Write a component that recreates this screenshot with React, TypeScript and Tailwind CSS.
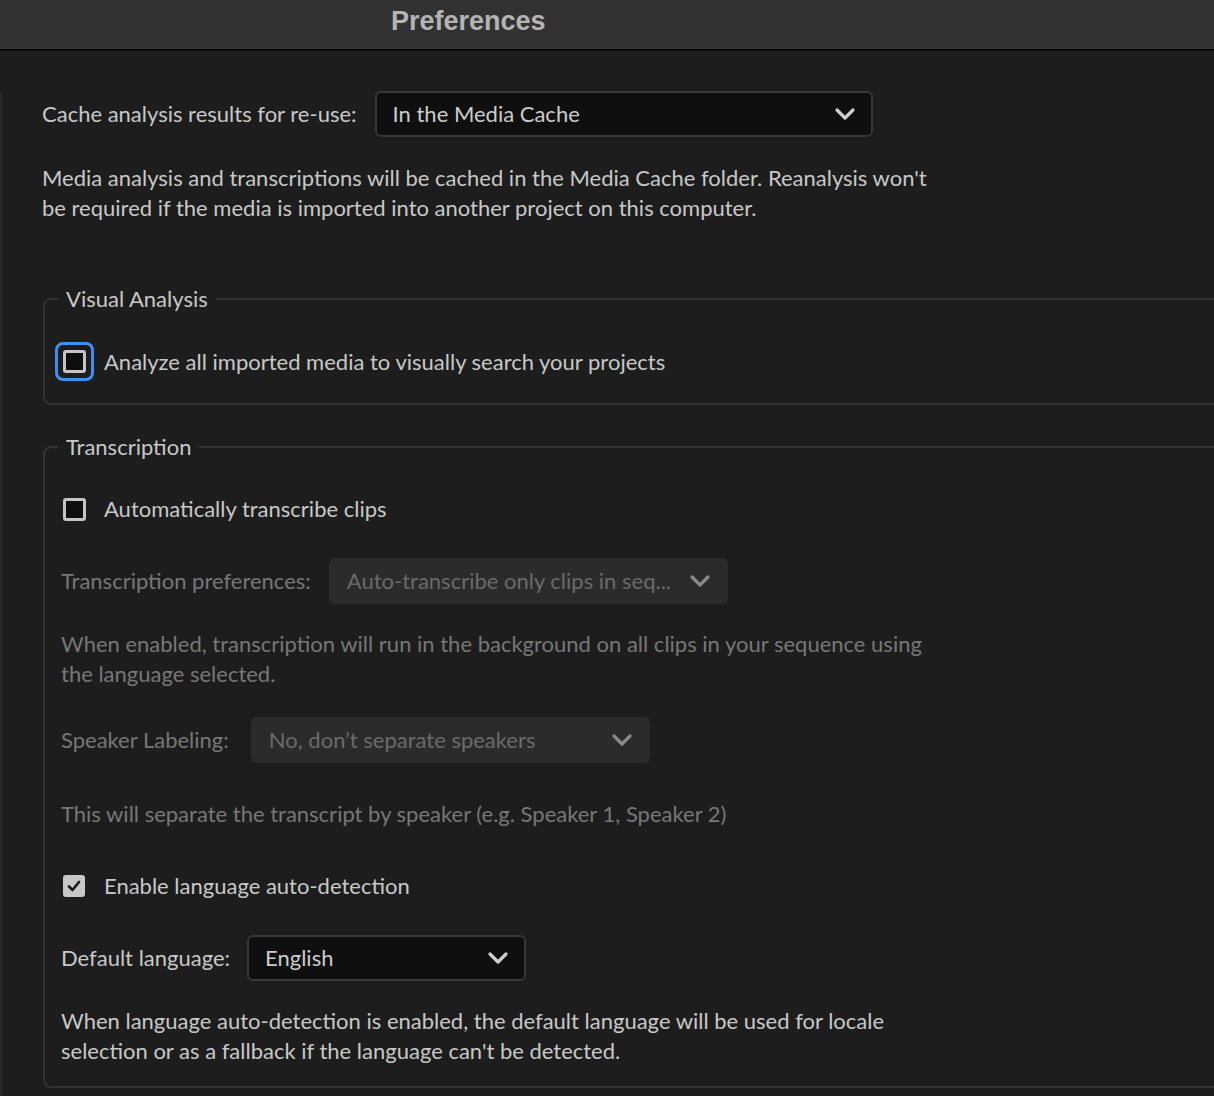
import React from "react";

function Chevron({ color }: { color: string }) {
  return (
    <svg width="22" height="14" viewBox="0 0 22 14" fill="none">
      <path d="M3 3 L11 11 L19 3" stroke={color} strokeWidth="3.2" strokeLinecap="round" strokeLinejoin="round" />
    </svg>
  );
}

function Dropdown({
  text,
  width,
  disabled,
}: {
  text: string;
  width: string;
  disabled?: boolean;
}) {
  return (
    <div
      className={
        disabled
          ? `${width} h-[46px] shrink-0 rounded-[6px] bg-[#2b2b2b] flex items-center justify-between pl-[18px] pr-[17px] text-[#6a6a6a]`
          : `${width} h-[46px] shrink-0 rounded-[6px] bg-[#0f0f0f] border-2 border-[#373737] flex items-center justify-between pl-[16px] pr-[15px] text-[#cccccc]`
      }
    >
      <span className="whitespace-nowrap">{text}</span>
      <Chevron color={disabled ? "#8a8a8a" : "#cfcfcf"} />
    </div>
  );
}

function CheckBox({ checked, focused }: { checked?: boolean; focused?: boolean }) {
  const box = checked ? (
    <div className="w-[22px] h-[22px] shrink-0 rounded-[3px] bg-[#c8c8c8] flex items-center justify-center">
      <svg width="16" height="16" viewBox="0 0 16 16" fill="none">
        <path d="M3 8.5 L6.5 12 L13 4" stroke="#1a1a1a" strokeWidth="2.6" strokeLinecap="round" strokeLinejoin="round" />
      </svg>
    </div>
  ) : (
    <div className="w-[23px] h-[23px] shrink-0 rounded-[3px] border-[3px] border-[#c4c4c4] bg-[#0e0e0e]" />
  );
  if (focused) {
    return (
      <div className="w-[39px] h-[39px] shrink-0 rounded-[8px] border-[3px] border-[#3e8ff0] flex items-center justify-center">
        {box}
      </div>
    );
  }
  return box;
}

export default function App() {
  return (
    <div
      className="w-[1214px] h-[1096px] bg-[#1d1d1d] overflow-hidden text-[22px] leading-[30px] text-[#c8c8c8]"
      style={{ fontFamily: "Lato, 'Noto Sans', sans-serif" }}
    >
      <header className="h-[51px] bg-[#323232] border-b-2 border-[#0a0a0a] flex items-center pl-[391px]">
        <span
          className="text-[27px] font-bold text-[#b4b4b4] leading-none -mt-[6px]"
          style={{ fontFamily: "'Liberation Sans', Arial, sans-serif" }}
        >
          Preferences
        </span>
      </header>

      <div className="flex h-[1045px]">
        <div className="w-[2px] shrink-0 mt-[42px] bg-[#2a2a2a]" />
        <div className="flex-1 min-w-0 pl-[40px] pt-[40px]">
          <div className="flex items-center gap-[18px]">
            <span className="whitespace-nowrap">Cache analysis results for re-use:</span>
            <Dropdown text="In the Media Cache" width="w-[498px]" />
          </div>
          <p className="mt-[26px] w-[900px]">
            Media analysis and transcriptions will be cached in the Media Cache folder. Reanalysis won't be
            required if the media is imported into another project on this computer.
          </p>

          <fieldset className="mt-[61px] ml-[1px] w-[1300px] border-2 border-[#333333] rounded-[8px] pl-[13px] pb-[22px]">
            <legend className="px-[8px] leading-[30px]">Visual Analysis</legend>
            <div className="mt-[28px] -ml-[3px] flex items-center gap-[10px]">
              <CheckBox focused />
              <span>Analyze all imported media to visually search your projects</span>
            </div>
          </fieldset>

          <fieldset className="mt-[27px] ml-[1px] w-[1300px] border-2 border-[#333333] rounded-[8px] pl-[13px] pb-[20px]">
            <legend className="px-[8px] leading-[30px]">Transcription</legend>
            <div className="pl-[3px] flex flex-col">
              <div className="mt-[32px] h-[30px] pl-[2px] flex items-center gap-[18px]">
                <CheckBox />
                <span>Automatically transcribe clips</span>
              </div>
              <div className="mt-[34px] flex items-center gap-[18px] text-[#777777]">
                <span className="whitespace-nowrap">Transcription preferences:</span>
                <Dropdown text="Auto-transcribe only clips in seq..." width="w-[399px]" disabled />
              </div>
              <p className="mt-[25px] w-[880px] text-[#777777]">
                When enabled, transcription will run in the background on all clips in your sequence using the
                language selected.
              </p>
              <div className="mt-[28px] flex items-center gap-[22px] text-[#777777]">
                <span className="whitespace-nowrap">Speaker Labeling:</span>
                <Dropdown text="No, don’t separate speakers" width="w-[399px]" disabled />
              </div>
              <p className="mt-[36px] text-[#777777]">
                This will separate the transcript by speaker (e.g. Speaker 1, Speaker 2)
              </p>
              <div className="mt-[42px] h-[30px] pl-[2px] flex items-center gap-[19px]">
                <CheckBox checked />
                <span>Enable language auto-detection</span>
              </div>
              <div className="mt-[34px] flex items-center gap-[17px]">
                <span className="whitespace-nowrap">Default language:</span>
                <Dropdown text="English" width="w-[279px]" />
              </div>
              <p className="mt-[25px] w-[880px]">
                When language auto-detection is enabled, the default language will be used for locale selection or
                as a fallback if the language can't be detected.
              </p>
            </div>
          </fieldset>
        </div>
      </div>
    </div>
  );
}
